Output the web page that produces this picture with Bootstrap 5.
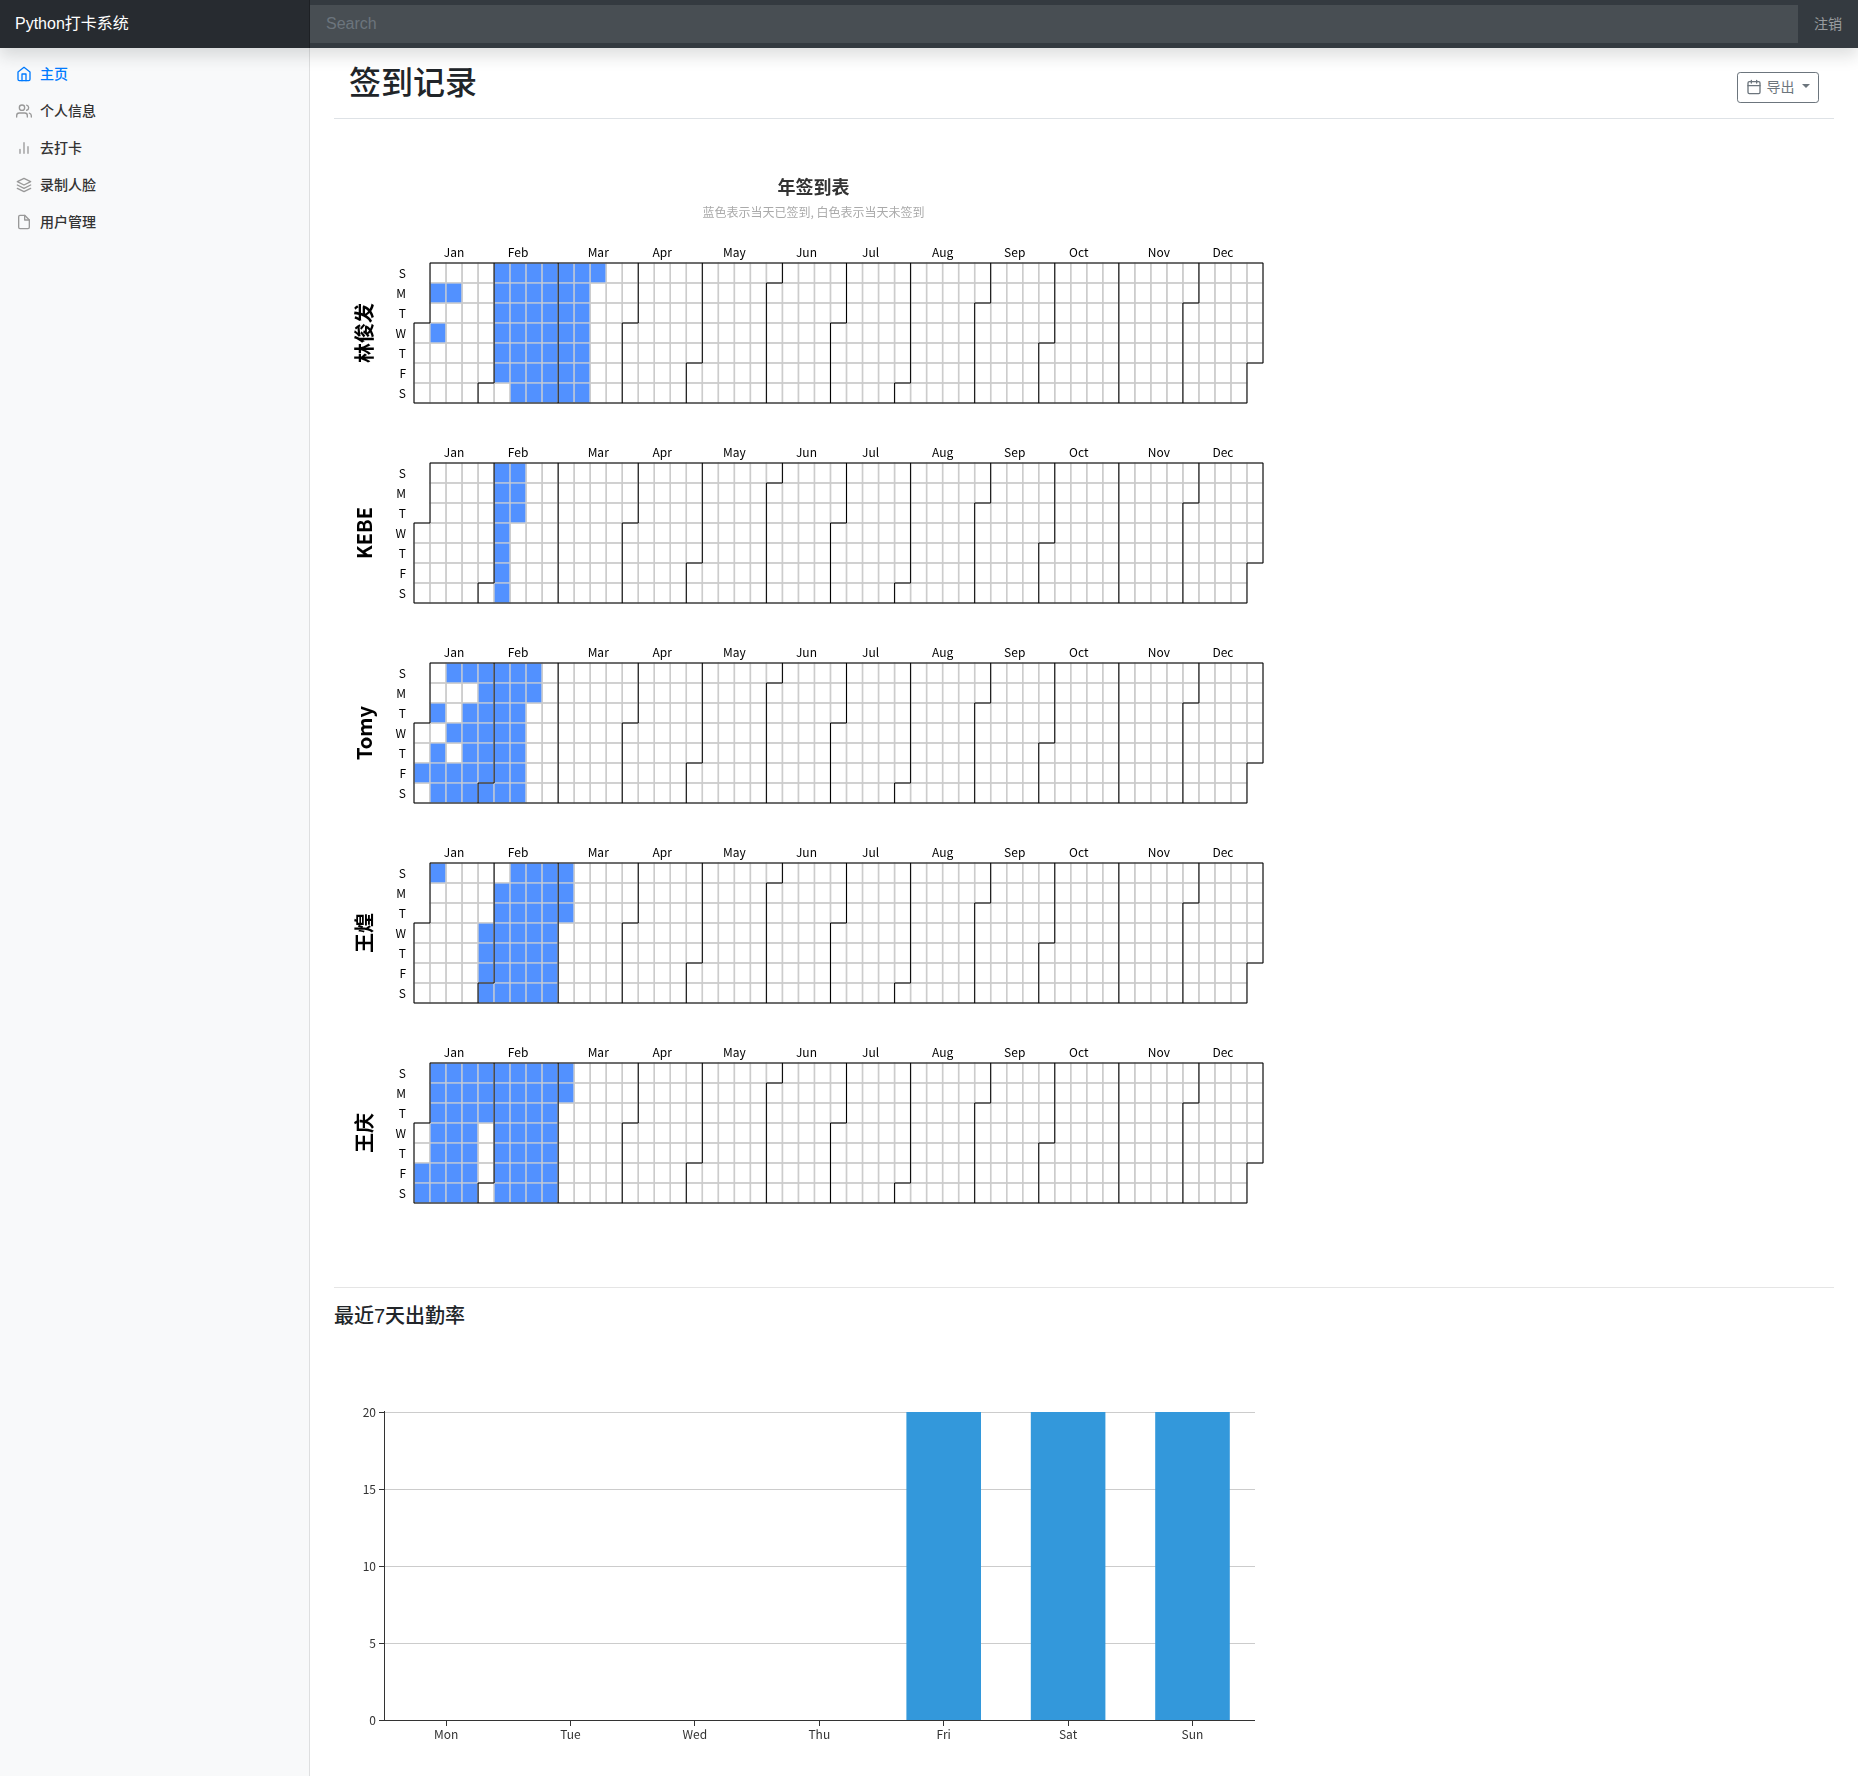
<!DOCTYPE html>
<html lang="zh-CN">
<head>
<meta charset="utf-8">
<meta name="viewport" content="width=device-width, initial-scale=1">
<title>Python打卡系统</title>
<link href="https://cdn.jsdelivr.net/npm/bootstrap@5.3.0/dist/css/bootstrap.min.css" rel="stylesheet">
<style>
body { font-family: "Liberation Sans", "Noto Sans CJK SC", sans-serif; color: #212529; overflow-x: hidden; }
.topbar { background: #343a40; height: 48px; z-index: 5; }
.side-col { width: 310px; flex: none; }
.topbar .brand { line-height: 24px; padding: 12px 15px; height: 48px; color: #fff; background: rgba(0,0,0,.25); box-shadow: inset -1px 0 0 rgba(0,0,0,.25); }
.topbar .search-box, .topbar .search-box:focus { height: 38px; padding: 6px 16px; color: #fff; background: rgba(255,255,255,.1); border: 0; box-shadow: none; }
.search-box::placeholder { color: #6c757d; }
.signout { width: 60px; flex: none; font-size: 14px; color: rgba(255,255,255,.5); }
.sidebar { background: #f8f9fa; box-shadow: inset -1px 0 0 rgba(0,0,0,.1); min-height: calc(100vh - 48px); }
.sidebar .nav-link { font-size: 14px; line-height: 21px; font-weight: 500; color: #333; padding: 8px 16px; }
.sidebar .nav-link svg { color: #999; margin-right: 4px; }
.sidebar .nav-link.active, .sidebar .nav-link.active svg { color: #007bff; }
.feather { width: 16px; height: 16px; vertical-align: text-bottom; fill: none; stroke: currentColor; stroke-width: 2; stroke-linecap: round; stroke-linejoin: round; }
.head-row { height: 71px; border-bottom: 1px solid #dee2e6; padding: 16px 15px 0; }
.head-row h1 { font-size: 32px; line-height: 38px; margin: 0; font-weight: 500; }
.btn-export { --bs-btn-color: #6c757d; font-size: 14px; line-height: 21px; padding: 4px 8px; border-radius: 3.2px; margin-top: 8px; }
.btn-export .feather { margin-right: 1px; }
.btn-export::after { margin-left: 3.6px; }
.rule { height: 1px; background: #e5e5e5; }
.sub-title { font-size: 20px; line-height: 24px; font-weight: 500; }
.plot { display: block; font-family: "Noto Sans CJK SC", sans-serif; font-size: 12px; will-change: transform; }
</style>
<script src="https://cdn.jsdelivr.net/npm/bootstrap@5.3.0/dist/js/bootstrap.bundle.min.js"></script>
</head>
<body>
<header class="topbar d-flex align-items-center position-relative shadow">
  <a class="brand side-col text-decoration-none" href="#">Python打卡系统</a>
  <input class="search-box form-control rounded-0 flex-grow-1" type="text" placeholder="Search" aria-label="Search">
  <a class="signout text-center text-decoration-none" href="#">注销</a>
</header>
<div class="d-flex">
  <nav class="sidebar side-col">
    <ul class="nav flex-column pt-2">
      <li class="nav-item"><a class="nav-link active" href="#"><svg class="feather" viewBox="0 0 24 24"><path d="M3 9l9-7 9 7v11a2 2 0 0 1-2 2H5a2 2 0 0 1-2-2z"/><path d="M9 22V12h6v10"/></svg> 主页</a></li>
      <li class="nav-item"><a class="nav-link" href="#"><svg class="feather" viewBox="0 0 24 24"><path d="M17 21v-2a4 4 0 0 0-4-4H5a4 4 0 0 0-4 4v2"/><circle cx="9" cy="7" r="4"/><path d="M23 21v-2a4 4 0 0 0-3-3.87M16 3.13a4 4 0 0 1 0 7.75"/></svg> 个人信息</a></li>
      <li class="nav-item"><a class="nav-link" href="#"><svg class="feather" viewBox="0 0 24 24"><path d="M18 20V10M12 20V4M6 20v-6"/></svg> 去打卡</a></li>
      <li class="nav-item"><a class="nav-link" href="#"><svg class="feather" viewBox="0 0 24 24"><path d="M12 2L2 7l10 5 10-5-10-5zM2 17l10 5 10-5M2 12l10 5 10-5"/></svg> 录制人脸</a></li>
      <li class="nav-item"><a class="nav-link" href="#"><svg class="feather" viewBox="0 0 24 24"><path d="M13 2H6a2 2 0 0 0-2 2v16a2 2 0 0 0 2 2h12a2 2 0 0 0 2-2V9z"/><path d="M13 2v7h7"/></svg> 用户管理</a></li>
    </ul>
  </nav>
  <main class="flex-grow-1 px-4">
    <div class="head-row d-flex justify-content-between align-items-start">
      <h1>签到记录</h1>
      <button class="btn btn-outline-secondary btn-export dropdown-toggle" type="button"><svg class="feather" viewBox="0 0 24 24"><rect x="3" y="4" width="18" height="18" rx="2"/><path d="M16 2v4M8 2v4M3 10h18"/></svg> 导出 </button>
    </div>
    <svg id="calendars" class="plot mt-4" width="960" height="1120"></svg>
    <div class="rule mt-4"></div>
    <h2 class="sub-title mt-3 mb-0">最近7天出勤率</h2>
    <svg id="attendance" class="plot mt-4" width="960" height="400"></svg>
  </main>
</div>
<script>
const NS = 'http://www.w3.org/2000/svg';
function add(parent, tag, attrs, text) {
  const el = document.createElementNS(NS, tag);
  for (const k in attrs) el.setAttribute(k, attrs[k]);
  if (text !== undefined) el.textContent = text;
  parent.appendChild(el);
  return el;
}

// Signed-in weeks for each weekday row, as [first, last] column ranges
const people = [
  ['林俊发', [[[5,11]], [[1,2],[5,10]], [[5,10]], [[1,1],[5,10]], [[5,10]], [[5,10]], [[6,10]]]],
  ['KEBE', [[[5,6]], [[5,6]], [[5,6]], [[5,5]], [[5,5]], [[5,5]], [[5,5]]]],
  ['Tomy', [[[2,7]], [[4,7]], [[1,1],[3,6]], [[2,6]], [[1,1],[3,6]], [[0,6]], [[1,6]]]],
  ['王煌', [[[1,1],[6,9]], [[5,9]], [[5,9]], [[4,8]], [[4,8]], [[4,8]], [[4,8]]]],
  ['王庆', [[[1,9]], [[1,9]], [[1,8]], [[1,3],[5,8]], [[1,3],[5,8]], [[0,3],[5,8]], [[0,3],[5,8]]]]
];
const months = [['Jan',2.5],['Feb',6.5],['Mar',11.5],['Apr',15.5],['May',20],['Jun',24.5],['Jul',28.5],['Aug',33],['Sep',37.5],['Oct',41.5],['Nov',46.5],['Dec',50.5]];
const monthDays = [31,29,31,30,31,30,31,31,30,31,30];
const cw = 849 / 53, ch = 20, left = 80;

const cal = document.getElementById('calendars');
add(cal, 'text', {x: 479.5, y: 50.5, 'text-anchor': 'middle', 'font-size': 18, 'font-weight': 700, fill: '#333'}, '年签到表');
add(cal, 'text', {x: 479.5, y: 74, 'text-anchor': 'middle', fill: '#aaa'}, '蓝色表示当天已签到, 白色表示当天未签到');
people.forEach(([name, rows], i) => {
  const g = add(cal, 'g', {transform: `translate(${left} ${120 + i * 200})`});
  const base = add(g, 'g', {fill: 'none', stroke: '#ccc', 'stroke-width': 1.4});
  const heat = add(g, 'g', {fill: '#5291ff'});
  for (let d = 3; d < 369; d++) {
    const c = Math.floor(d / 7), r = d % 7;
    add(base, 'rect', {x: c * cw, y: r * ch, width: cw, height: ch});
    if (rows[r].some(([a, b]) => c >= a && c <= b))
      add(heat, 'rect', {x: c * cw + .6, y: r * ch + .6, width: cw - 1.4, height: ch - 1.3});
  }
  const H = 7 * ch;
  let path = `M0 ${H}V${3*ch}H${cw}V0H${53*cw}V${5*ch}H${52*cw}V${H}Z`;
  let d = 3;
  monthDays.forEach(n => {
    d += n;
    const c = Math.floor(d / 7), r = d % 7;
    path += r ? `M${c*cw} ${H}V${r*ch}H${(c+1)*cw}V0` : `M${c*cw} ${H}V0`;
  });
  add(g, 'path', {d: path, fill: 'none', stroke: '#000'});
  months.forEach(([m, c]) => add(g, 'text', {x: c * cw, y: -6, 'text-anchor': 'middle'}, m));
  [...'SMTWTFS'].forEach((s, r) => add(g, 'text', {x: -8, y: r * ch + 14.5, 'text-anchor': 'end'}, s));
  add(g, 'text', {transform: 'translate(-42 70) rotate(-90)', 'text-anchor': 'middle', 'font-size': 20, 'font-weight': 700}, name);
});

const bar = document.getElementById('attendance');
[20, 15, 10, 5, 0].forEach((v, i) => {
  const y = 60.5 + i * 77;
  if (v) add(bar, 'path', {d: `M50 ${y}H921`, stroke: '#ccc'});
  add(bar, 'text', {x: 42, y: y + 4.5, 'text-anchor': 'end', fill: '#333'}, v);
});
[0, 0, 0, 0, 20, 20, 20].forEach((v, i) => {
  if (v) add(bar, 'rect', {x: 49.9 + 24.9 + i * 124.4, y: 368 - v * 15.4, width: 74.6, height: v * 15.4, fill: '#3398db'});
});
[20, 15, 10, 5, 0].forEach((v, i) => add(bar, 'path', {d: `M45 ${60.5 + i * 77}H50`, stroke: '#333'}));
add(bar, 'path', {d: 'M50.5 59V369M50 368.5H921', stroke: '#333', fill: 'none'});
['Mon','Tue','Wed','Thu','Fri','Sat','Sun'].forEach((s, i) => {
  const x = 49.9 + 62.2 + i * 124.4;
  add(bar, 'path', {d: `M${Math.floor(x) + .5} 369V374`, stroke: '#333'});
  add(bar, 'text', {x: x, y: 387, 'text-anchor': 'middle', fill: '#333'}, s);
});
</script>
</body>
</html>
